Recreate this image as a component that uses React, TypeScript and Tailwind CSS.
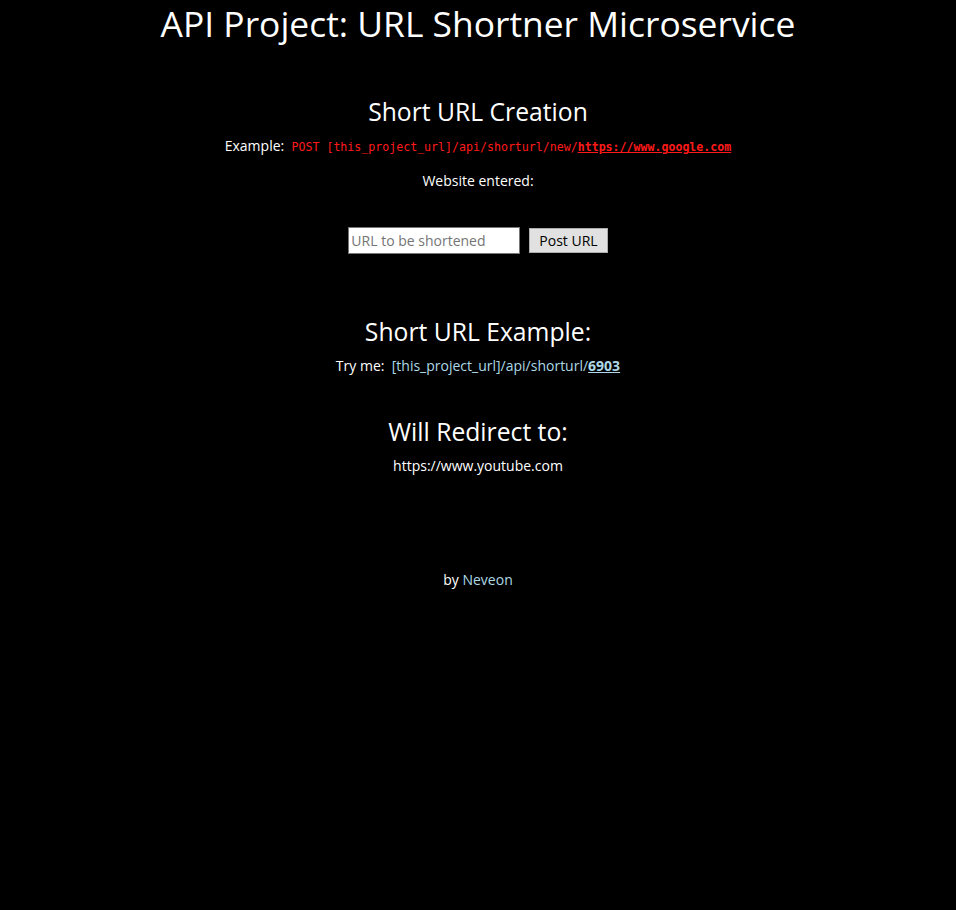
import { useState } from 'react'

export default function App() {
  const [url, setUrl] = useState('')

  return (
    <div className="min-h-[910px] bg-black text-white text-center font-['Open_Sans',sans-serif]">
      <h1 className="pt-[1px] text-[35.4px] leading-[44px]">API Project: URL Shortner Microservice</h1>

      <div className="mt-[45px]">
        <h2 className="text-[24.7px] leading-[44px]">Short URL Creation</h2>
        <p className="mt-[2px] text-[14px] leading-[20px]">
          Example:&nbsp;{' '}
          <code className="font-['DejaVu_Sans_Mono',monospace] text-[11.6px] text-[#ff1a1a]">
            POST [this_project_url]/api/shorturl/new/
            <span className="underline font-bold">https://www.google.com</span>
          </code>
        </p>
        <p className="mt-[14px] text-[14px] leading-[20px]">Website entered:</p>

        <form
          className="mt-[36px] flex items-center justify-center gap-[9px]"
          onSubmit={(e) => e.preventDefault()}
        >
          <input
            value={url}
            onChange={(e) => setUrl(e.target.value)}
            placeholder="URL to be shortened"
            className="w-[172px] h-[27px] border border-[#767676] bg-white px-[2px] text-[14px] text-black placeholder:text-[#757575]"
          />
          <button className="h-[25px] px-[9px] border border-[#adadad] bg-[#e1e1e1] text-[14px] text-black">
            Post URL
          </button>
        </form>
      </div>

      <div className="mt-[56px]">
        <h2 className="text-[24.7px] leading-[44px]">Short URL Example:</h2>
        <p className="mt-[2px] text-[14px] leading-[20px]">
          Try me:&nbsp;{' '}
          <span className="text-[#add8e6]">
            [this_project_url]/api/shorturl/<span className="underline font-bold">6903</span>
          </span>
        </p>
      </div>

      <div className="mt-[34px]">
        <h2 className="text-[24.7px] leading-[44px]">Will Redirect to:</h2>
        <p className="mt-[2px] text-[14px] leading-[20px]">https://www.youtube.com</p>
      </div>

      <p className="mt-[94px] text-[14px] leading-[20px]">
        by <span className="text-[#add8e6]">Neveon</span>
      </p>
    </div>
  )
}
